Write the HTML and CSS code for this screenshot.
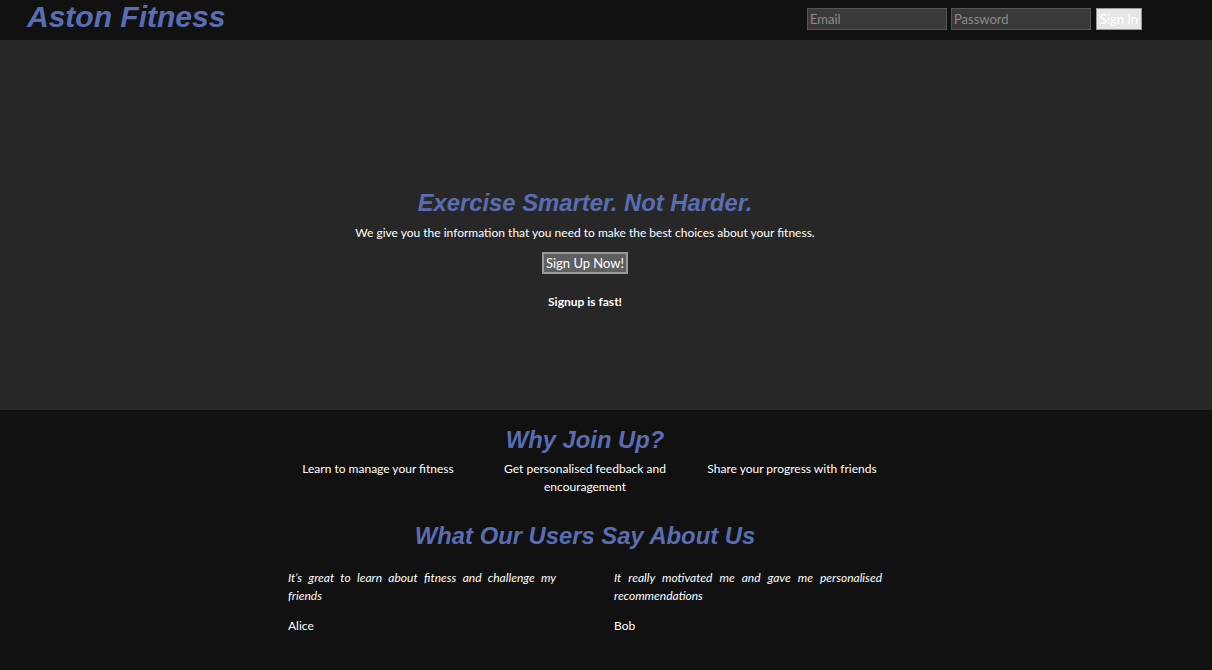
FILE: index.html
```html
<!DOCTYPE html>
<html lang="en">
<head>
<meta charset="utf-8">
<title>Aston Fitness</title>
<link rel="stylesheet" href="styles.css">
</head>
<body>
<header class="topbar">
  <div class="wrap topbar-inner">
    <h1 class="logo">Aston Fitness</h1>
    <form class="login">
      <input class="field" type="text" placeholder="Email">
      <input class="field" type="password" placeholder="Password">
      <button class="signin" type="button">Sign In</button>
    </form>
  </div>
</header>
<section class="hero">
  <div class="wrap hero-inner">
    <h2 class="heading">Exercise Smarter. Not Harder.</h2>
    <p class="lead">We give you the information that you need to make the best choices about your fitness.</p>
    <button class="signup" type="button">Sign Up Now!</button>
    <p class="fast">Signup is fast!</p>
  </div>
</section>
<main class="wrap content">
  <h2 class="heading">Why Join Up?</h2>
  <div class="reasons">
    <p>Learn to manage your fitness</p>
    <p>Get personalised feedback and encouragement</p>
    <p>Share your progress with friends</p>
  </div>
  <h2 class="heading heading-users">What Our Users Say About Us</h2>
  <div class="quotes">
    <div class="quote">
      <p class="quote-text">It’s great to learn about fitness and challenge my friends</p>
      <p class="quote-name">Alice</p>
    </div>
    <div class="quote">
      <p class="quote-text">It really motivated me and gave me personalised recommendations</p>
      <p class="quote-name">Bob</p>
    </div>
  </div>
</main>
</body>
</html>
```
FILE: styles.css
```css
html, body {
  margin: 0;
  padding: 0;
  background: #111111;
  color: #ffffff;
  font-family: Lato, "Open Sans", sans-serif;
  font-size: 12px;
}
.wrap {
  width: 1170px;
}
.topbar {
  background: #111111;
  height: 40px;
}
.topbar-inner {
  display: flex;
  align-items: flex-start;
  justify-content: space-between;
  height: 40px;
}
.logo {
  margin: 0 0 0 27px;
  font-family: "Liberation Sans", Arial, sans-serif;
  font-style: italic;
  font-weight: bold;
  font-size: 30px;
  line-height: 34px;
  color: #5a6db3;
}
.login {
  display: flex;
  gap: 4px;
  margin-top: 8px;
  margin-right: 28px;
}
.field {
  flex: none;
  box-sizing: border-box;
  width: 140px;
  height: 22px;
  margin: 0;
  padding: 0 2px;
  background: #3a3a3a;
  border: 1px solid #555555;
  color: #dddddd;
  font-family: Lato, "Open Sans", sans-serif;
  font-size: 13px;
}
.field::placeholder {
  color: #8a8a8a;
}
.signin {
  flex: none;
  box-sizing: border-box;
  height: 22px;
  width: 46px;
  margin-left: 1px;
  padding: 0;
  background: #e6e6e6;
  border: 1px solid #999999;
  color: #ffffff;
  font-family: Lato, "Open Sans", sans-serif;
  font-size: 13px;
}
.hero {
  background: #272727;
  height: 370px;
}
.hero-inner {
  display: flex;
  flex-direction: column;
  align-items: center;
  padding-top: 149px;
}
.heading {
  margin: 0;
  font-family: "Liberation Sans", Arial, sans-serif;
  font-style: italic;
  font-weight: bold;
  font-size: 23.8px;
  line-height: 28px;
  color: #5a6db3;
  text-align: center;
}
.lead {
  margin: 7px 0 0;
  line-height: 17px;
}
.signup {
  margin-top: 11px;
  height: 22px;
  padding: 0 2px;
  background: #5f5f5f;
  border: 2px solid #999999;
  color: #ffffff;
  font-family: Lato, "Open Sans", sans-serif;
  font-size: 13px;
}
.fast {
  margin: 19px 0 0;
  font-weight: bold;
  line-height: 17px;
}
.content {
  display: flex;
  flex-direction: column;
  align-items: center;
  padding-top: 16px;
}
.reasons {
  display: grid;
  grid-template-columns: repeat(3, 180px);
  column-gap: 27px;
  text-align: center;
  margin-top: 6px;
}
.reasons p {
  margin: 0;
  line-height: 18px;
}
.heading-users {
  margin-top: 26px;
}
.quotes {
  display: grid;
  grid-template-columns: 268px 268px;
  column-gap: 58px;
  margin-top: 19px;
}
.quote-text {
  margin: 0;
  font-style: italic;
  text-align: justify;
  line-height: 18px;
}
.quote-name {
  margin: 12px 0 0;
  line-height: 18px;
}
```
